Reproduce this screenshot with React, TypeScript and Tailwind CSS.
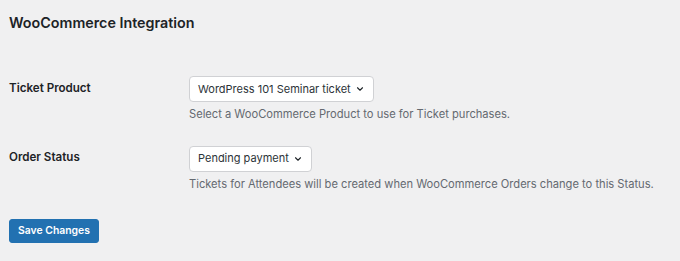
import React from 'react';

const Chevron = () => (
  <svg width="10" height="10" viewBox="0 0 24 24" fill="none" stroke="#1d2327" strokeWidth="2.6" strokeLinecap="round" strokeLinejoin="round">
    <path d="M6 9l6 6 6-6" />
  </svg>
);

const FakeSelect: React.FC<{ value: string }> = ({ value }) => (
  <div className="inline-flex h-[26px] items-center gap-[4px] whitespace-nowrap rounded-[4px] border border-[#d0d1d4] bg-white pl-[8px] pr-[8px] text-[11px] text-[#2c3338]">
    <span>{value}</span>
    <Chevron />
  </div>
);

const App: React.FC = () => {
  return (
    <div className="h-[261px] w-[680px] bg-[#f0f0f1] px-[9px] pt-[12px] text-[#1d2327] font-['Inter','Liberation_Sans',sans-serif]">
      <h2 className="text-[14.3px] font-semibold leading-[22px]">WooCommerce Integration</h2>

      <div className="mt-[41px] flex">
        <div className="w-[180px] shrink-0 pt-[4px] text-[11.6px] font-semibold leading-[18px]">Ticket Product</div>
        <div>
          <FakeSelect value="WordPress 101 Seminar ticket" />
          <p className="mt-[3px] whitespace-nowrap text-[11.15px] leading-[18px] text-[#646970]">
            Select a WooCommerce Product to use for Ticket purchases.
          </p>
        </div>
      </div>

      <div className="mt-[21px] flex">
        <div className="w-[180px] shrink-0 pt-[4px] text-[11.6px] font-semibold leading-[18px]">Order Status</div>
        <div>
          <FakeSelect value="Pending payment" />
          <p className="mt-[3px] whitespace-nowrap text-[11.15px] leading-[18px] text-[#646970]">
            Tickets for Attendees will be created when WooCommerce Orders change to this Status.
          </p>
        </div>
      </div>

      <button className="mt-[26px] h-[24px] rounded-[3px] border border-[#2271b1] bg-[#2271b1] px-[8px] text-[10.4px] font-semibold leading-[22px] text-white">
        Save Changes
      </button>
    </div>
  );
};

export default App;
